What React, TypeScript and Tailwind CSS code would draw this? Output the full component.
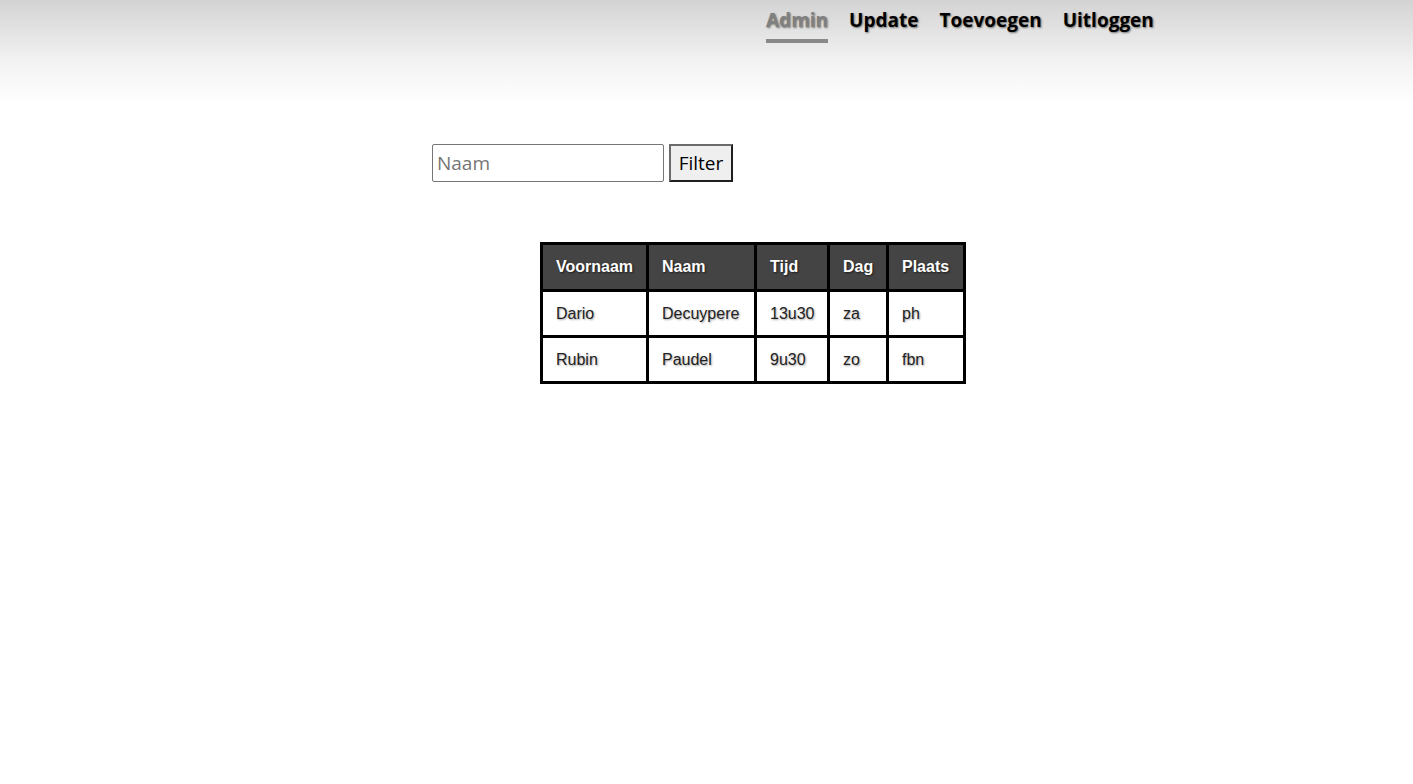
import React from "react";

const rows = [
  ["Dario", "Decuypere", "13u30", "za", "ph"],
  ["Rubin", "Paudel", "9u30", "zo", "fbn"],
];
const heads = ["Voornaam", "Naam", "Tijd", "Dag", "Plaats"];
const widths = ["w-[106px]", "w-[108px]", "w-[73px]", "w-[59px]", "w-[77px]"];

export default function App() {
  return (
    <div className="min-h-[784px] bg-white" style={{ fontFamily: '"Open Sans", "Noto Sans", sans-serif' }}>
      <header className="h-[104px] bg-gradient-to-b from-[#d3d3d3] via-[#f3f3f3] via-60% to-white">
        <nav className="flex gap-[21px] pl-[766px] pt-[6px]">
          {["Admin", "Update", "Toevoegen", "Uitloggen"].map((t, i) => (
            <div key={t} className="flex flex-col">
              <span
                className={`text-[19px] leading-[29px] font-bold ${i === 0 ? "text-[#808080]" : "text-black"} [text-shadow:1px_1px_2px_rgba(0,0,0,0.5)]`}
              >
                {t}
              </span>
              {i === 0 && <span className="mt-[4px] h-[4px] bg-[#888888]" />}
            </div>
          ))}
        </nav>
      </header>
      <div className="flex gap-[5px] pl-[432px] pt-[40px]">
        <input
          placeholder="Naam"
          className="h-[38px] w-[232px] rounded-[2px] border border-[#767676] px-[4px] text-[19px] text-black placeholder:text-[#757575] outline-none"
        />
        <button className="h-[38px] w-[64px] border-2 border-[#6b6b6b] border-r-[#1f1f1f] border-b-[#1f1f1f] bg-[#efefef] text-[19px] text-black">
          Filter
        </button>
      </div>
      <div className="pl-[540px] pt-[60px]">
        <table
          className="w-[426px] table-fixed border-collapse border-[3px] border-black text-[16px]"
          style={{ fontFamily: '"Liberation Sans", Arial, sans-serif' }}
        >
          <thead>
            <tr>
              {heads.map((h, i) => (
                <th
                  key={h}
                  className={`${widths[i]} border-[3px] border-black bg-[#444444] px-[13px] py-[12px] text-left font-bold leading-[20px] text-white [text-shadow:1px_1px_2px_rgba(0,0,0,0.6)]`}
                >
                  {h}
                </th>
              ))}
            </tr>
          </thead>
          <tbody>
            {rows.map((r) => (
              <tr key={r[0]}>
                {r.map((c, j) => (
                  <td
                    key={j}
                    className="border-[3px] border-black px-[13px] py-[12px] leading-[19px] text-[#222222] [text-shadow:1px_1px_2px_rgba(0,0,0,0.35)]"
                  >
                    {c}
                  </td>
                ))}
              </tr>
            ))}
          </tbody>
        </table>
      </div>
    </div>
  );
}
